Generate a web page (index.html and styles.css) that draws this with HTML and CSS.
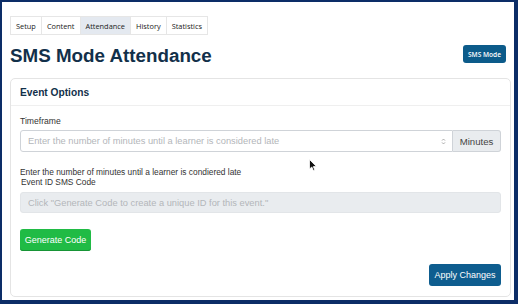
FILE: index.html
```html
<!DOCTYPE html>
<html>
<head>
<meta charset="utf-8">
<link rel="stylesheet" href="styles.css">
</head>
<body>
<div class="frame">
  <div class="tabs">
    <span class="tab">Setup</span>
    <span class="tab">Content</span>
    <span class="tab active">Attendance</span>
    <span class="tab">History</span>
    <span class="tab">Statistics</span>
  </div>
  <div class="title-row">
    <h1 class="title">SMS Mode Attendance</h1>
    <button class="btn-sms">SMS Mode</button>
  </div>
  <div class="card">
    <div class="card-header">Event Options</div>
    <div class="card-body">
      <label class="label">Timeframe</label>
      <div class="input-group">
        <div class="input">
          <span class="placeholder">Enter the number of minutes until a learner is considered late</span>
          <svg class="spin" width="5" height="7" viewBox="0 0 5 7"><path d="M1 2.6 L2.5 1 L4 2.6 M1 4.4 L2.5 6 L4 4.4" fill="none" stroke="#9a9a9a" stroke-width="0.8"/></svg>
        </div>
        <div class="addon">Minutes</div>
      </div>
      <div class="help">Enter the number of minutes until a learner is condiered late</div>
      <div class="label2">Event ID SMS Code</div>
      <div class="input disabled"><span class="placeholder">Click "Generate Code to create a unique ID for this event."</span></div>
      <div class="gen-row"><button class="btn-green">Generate Code</button></div>
      <div class="apply-row"><button class="btn-blue">Apply Changes</button></div>
    </div>
  </div>
  <svg class="cursor" width="9" height="13" viewBox="0 0 9 13"><path d="M0.5 0.5 L0.5 10 L2.8 8 L4.4 11.6 L5.8 11 L4.3 7.6 L7.3 7.4 Z" fill="#111" stroke="#fff" stroke-width="0.8"/></svg>
</div>
</body>
</html>
```
FILE: styles.css
```css
html, body {
  margin: 0;
  padding: 0;
  background: #0c2d67;
}
.frame {
  position: relative;
  box-sizing: border-box;
  width: 518px;
  height: 304px;
  border-style: solid;
  border-color: #0c2d67;
  border-width: 2px 4px 4px 2px;
  background: #fff;
  padding: 14px 3px 0 8px;
  font-family: "Liberation Sans", Arial, sans-serif;
  overflow: hidden;
}
.tabs {
  display: flex;
  height: 19px;
}
.tab {
  display: flex;
  align-items: center;
  box-sizing: border-box;
  height: 19px;
  padding: 0 5px;
  border: 1px solid #e6e6e6;
  margin-left: -1px;
  font-family: "Open Sans", sans-serif;
  font-size: 7.4px;
  color: #222;
}
.tab:first-child { margin-left: 0; }
.tab.active { background: #e4e9f0; }
.title-row {
  display: flex;
  justify-content: space-between;
  align-items: center;
  margin-top: 9px;
  padding-right: 5px;
}
.title {
  margin: 0;
  font-size: 18.8px;
  line-height: 23px;
  font-weight: bold;
  color: #12304a;
}
.btn-sms {
  height: 18px;
  padding: 0 5px;
  margin-top: -3px;
  border: none;
  border-radius: 3px;
  background: #0c5b8a;
  color: #fff;
  font-family: "Open Sans", sans-serif;
  font-size: 6.6px;
  font-weight: 600;
}
.card {
  box-sizing: border-box;
  margin-top: 11px;
  width: 501px;
  height: 219px;
  border: 1px solid #e4e4e4;
  border-radius: 5px;
}
.card-header {
  box-sizing: border-box;
  height: 27px;
  padding: 0 9px;
  display: flex;
  align-items: center;
  border-bottom: 1px solid #efefef;
  font-size: 10.2px;
  font-weight: bold;
  color: #12304a;
}
.card-body {
  padding: 10px 9px 0 9px;
  display: flex;
  flex-direction: column;
}
.label {
  font-size: 8.6px;
  line-height: 11px;
  color: #333;
}
.input-group {
  display: flex;
  margin-top: 3px;
  height: 22px;
}
.input {
  position: relative;
  box-sizing: border-box;
  flex: 1;
  height: 22px;
  border: 1px solid #cfd3d8;
  border-radius: 3px 0 0 3px;
  display: flex;
  align-items: center;
  padding-left: 7px;
}
.placeholder {
  font-size: 9.3px;
  color: #b3b6ba;
  white-space: nowrap;
}
.spin {
  position: absolute;
  right: 6px;
  top: 7px;
}
.addon {
  box-sizing: border-box;
  width: 48px;
  height: 22px;
  background: #e9ecef;
  border: 1px solid #cfd3d8;
  border-left: none;
  border-radius: 0 3px 3px 0;
  display: flex;
  align-items: center;
  justify-content: center;
  font-size: 9.6px;
  color: #444;
}
.help {
  margin-top: 15px;
  font-size: 8.35px;
  line-height: 10px;
  color: #333;
}
.label2 {
  font-size: 8.35px;
  line-height: 10px;
  color: #333;
  padding-left: 1px;
}
.input.disabled {
  flex: none;
  margin-top: 5px;
  height: 21px;
  background: #e9ecef;
  border-color: #e2e5e8;
  border-radius: 3px;
}
.gen-row {
  margin-top: 16px;
  display: flex;
}
.btn-green {
  box-sizing: border-box;
  width: 71px;
  height: 22px;
  border: none;
  border-radius: 3px;
  background: #20bb45;
  box-shadow: inset 0 -1px 0 #179436;
  color: #fff;
  font-family: "Liberation Sans", Arial, sans-serif;
  font-size: 9px;
  padding: 0;
}
.apply-row {
  margin-top: 13px;
  display: flex;
  justify-content: flex-end;
}
.btn-blue {
  box-sizing: border-box;
  width: 72px;
  height: 22px;
  border: none;
  border-radius: 3px;
  background: #0e5d8f;
  color: #fff;
  font-family: "Liberation Sans", Arial, sans-serif;
  font-size: 9px;
  padding: 0;
}
.cursor {
  position: absolute;
  left: 307px;
  top: 157px;
}
```
